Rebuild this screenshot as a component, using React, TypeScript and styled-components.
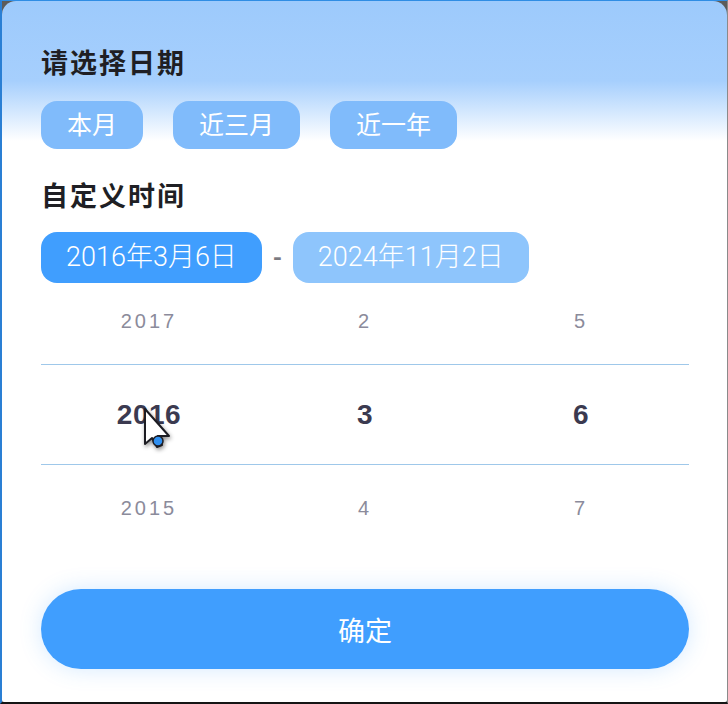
import React from 'react';
import styled, { createGlobalStyle } from 'styled-components';

const GlobalStyle = createGlobalStyle`
  html, body {
    margin: 0;
    padding: 0;
    background: #5c5c5c;
  }
  body {
    font-family: Roboto, "Noto Sans CJK SC", sans-serif;
  }
`;

const Frame = styled.div`
  width: 728px;
  height: 704px;
  box-sizing: border-box;
  border-top: 1px solid #2f8de4;
  border-left: 2px solid #2a7fd4;
  border-bottom: 2px solid #151515;
  border-right: 1px solid #8a8a8a;
  background: #5c5c5c;
  position: relative;
  overflow: hidden;
`;

const Sheet = styled.div`
  height: 100%;
  box-sizing: border-box;
  border-radius: 14px 14px 2px 2px;
  background: linear-gradient(180deg, #9dcafc 0, #a6cffd 80px, #ffffff 140px);
  padding: 42px 38px 0 39px;
  display: flex;
  flex-direction: column;
  & > * {
    flex-shrink: 0;
  }
`;

const Heading = styled.div`
  font-family: "Noto Sans CJK SC", sans-serif;
  font-size: 27px;
  font-weight: 700;
  letter-spacing: 2px;
  line-height: 38px;
  color: #1f1f24;
`;

const ChipRow = styled.div`
  display: flex;
  align-items: center;
  gap: 30px;
  margin: 20px 0 27px;
`;

const Chip = styled.button<{ $tone: 'soft' | 'strong' | 'pale' }>`
  border: none;
  margin: 0;
  height: ${p => (p.$tone === 'soft' ? 48 : 51)}px;
  padding: 0 ${p => (p.$tone === 'soft' ? 26 : 25)}px;
  border-radius: 16px;
  background: ${p =>
    p.$tone === 'strong' ? '#409efe' : p.$tone === 'pale' ? '#8ec5fc' : '#80bbfb'};
  color: #ffffff;
  font-family: Roboto, "Noto Sans CJK SC", sans-serif;
  font-size: ${p => (p.$tone === 'soft' ? 25 : 27)}px;
  font-weight: ${p => (p.$tone === 'soft' ? 400 : 300)};
  line-height: 1;
  white-space: nowrap;
`;

const DateRow = styled.div`
  display: flex;
  align-items: center;
  margin-top: 18px;
`;

const Dash = styled.span`
  width: 31px;
  text-align: center;
  font-size: 24px;
  font-weight: 700;
  color: #7a7a80;
`;

const Picker = styled.div`
  display: flex;
  flex-direction: column;
`;

const PickerRow = styled.div<{ $active?: boolean; $h: number; $shift?: number }>`
  display: grid;
  grid-template-columns: repeat(3, 1fr);
  align-items: center;
  height: ${p => p.$h}px;
  box-sizing: border-box;
  padding-bottom: ${p => p.$shift ?? 0}px;
  border-top: ${p => (p.$active ? '1px solid #9fc8ea' : 'none')};
  border-bottom: ${p => (p.$active ? '1px solid #9fc8ea' : 'none')};
`;

const Cell = styled.span<{ $active?: boolean }>`
  text-align: center;
  font-family: "Liberation Sans", Arial, sans-serif;
  font-size: ${p => (p.$active ? 28 : 20)}px;
  font-weight: ${p => (p.$active ? 700 : 400)};
  letter-spacing: ${p => (p.$active ? 0.5 : 3)}px;
  color: ${p => (p.$active ? '#3b3a50' : '#8b8b9b')};
`;

const ConfirmButton = styled.button`
  margin-top: 38px;
  height: 80px;
  width: 100%;
  border: none;
  border-radius: 40px;
  background: #409efe;
  color: #ffffff;
  font-family: "Noto Sans CJK SC", sans-serif;
  font-size: 27px;
  box-shadow: 0 0 22px rgba(64, 158, 254, 0.22);
`;

const Pointer = styled.svg`
  position: absolute;
  left: 140px;
  top: 406px;
  filter: drop-shadow(1px 2px 2px rgba(0, 0, 0, 0.45));
`;

const presets = ['本月', '近三月', '近一年'];

const rows: { cells: string[]; active?: boolean; h: number; shift?: number }[] = [
  { cells: ['2017', '2', '5'], h: 81, shift: 5 },
  { cells: ['2016', '3', '6'], h: 101, active: true },
  { cells: ['2015', '4', '7'], h: 86 },
];

const App: React.FC = () => (
  <>
    <GlobalStyle />
    <Frame>
      <Sheet>
        <Heading>请选择日期</Heading>
        <ChipRow>
          {presets.map(label => (
            <Chip key={label} $tone="soft">{label}</Chip>
          ))}
        </ChipRow>
        <Heading>自定义时间</Heading>
        <DateRow>
          <Chip $tone="strong">2016年3月6日</Chip>
          <Dash>-</Dash>
          <Chip $tone="pale">2024年11月2日</Chip>
        </DateRow>
        <Picker>
          {rows.map((row, i) => (
            <PickerRow key={i} $active={row.active} $h={row.h} $shift={row.shift}>
              {row.cells.map((c, j) => (
                <Cell key={j} $active={row.active}>{c}</Cell>
              ))}
            </PickerRow>
          ))}
        </Picker>
        <ConfirmButton>确定</ConfirmButton>
      </Sheet>
      {/* mouse pointer in the capture */}
      <Pointer width="34" height="44" viewBox="0 0 34 44">
        <path
          d="M3 2 L3 37 L10 31 L15 40 L20 38 L16 29 L27 29 Z"
          fill="#ffffff"
          stroke="#1c1c22"
          strokeWidth="2"
          strokeLinejoin="round"
        />
        <circle cx="16" cy="34" r="5" fill="#2f8ff0" stroke="#1c1c22" strokeWidth="1.5" />
      </Pointer>
    </Frame>
  </>
);

export default App;
